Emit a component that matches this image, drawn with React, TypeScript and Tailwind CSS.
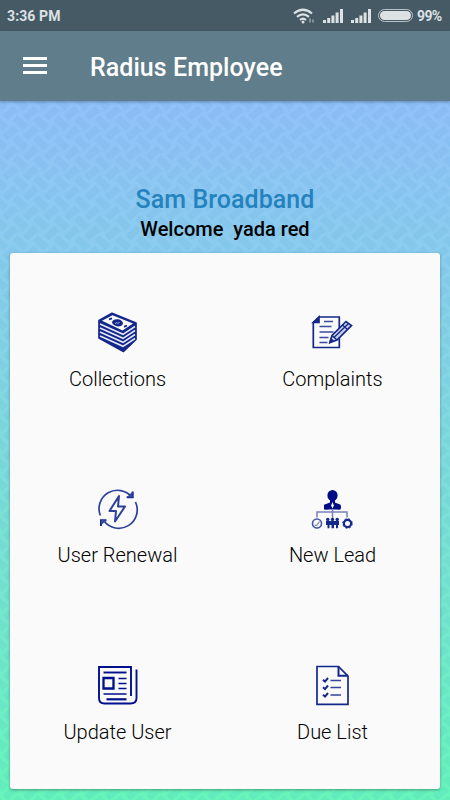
import React from "react";

type IconProps = { children: React.ReactNode };

function Icon({ children }: IconProps) {
  return (
    <svg width="56" height="56" viewBox="0 0 56 56" fill="none" stroke="#14288c" strokeWidth="1.7">
      {children}
    </svg>
  );
}

function MoneyIcon() {
  return (
    <Icon>
      <path d="M9 15.500 22 8.300 46 18 46 34.500 33.500 46.500 9 33Z" fill="#14288c" strokeLinejoin="round" />
      <path d="M12 15.800 22.500 10.200 43 18.400 32.500 25.500Z" fill="#fafafa" stroke="none" />
      <ellipse cx="27.500" cy="17.800" rx="5.500" ry="3.500" fill="#14288c" stroke="none" transform="rotate(10 27.500 17.800)" />
      <path d="M25.500 19c.5-3 2.500 1 4-2" stroke="#b9c0e0" strokeWidth="1" />
      <path d="M19 14.300l3-1M34 21.800l3-1.300" strokeWidth="1.800" />
      <path d="M10 19l23 10.300L45 21.500M10 23l23 10.300L45 25.500M10 27l23 10.300L45 29.500M10 31l23 10.300L45 33.500" stroke="#e4e7f4" strokeWidth="1.500" />
    </Icon>
  );
}

function ComplaintIcon() {
  return (
    <Icon>
      <path d="M15 12H35.300V42.500H9.300V17.500Z" />
      <path d="M15 12V17.500H9.300Z" fill="#14288c" />
      <path d="M20 16.500h9M15.500 21.500h12M15.500 27h14M15.500 32.500h9M15.500 37.500h8" stroke="#3b4b9f" />
      <path d="M26 37.500 28 30.500 42 16.500 47.500 20.500 33 35Z" fill="#c9cee6" />
      <path d="M28 30.500 33 35M30 32.500 44.500 18.500M38.500 20 43.500 24.500" strokeWidth="1.300" />
      <path d="M26 37.500l1-3.500 2 2Z" fill="#14288c" />
    </Icon>
  );
}

function RenewalIcon() {
  return (
    <Icon>
      <g transform="translate(-.5 -1.500)">
        <path d="M10.800 36A18.500 18.500 0 0 1 42.300 17.500M46 22.500A18.500 18.500 0 0 1 14.500 41.500" stroke="#2d409c" />
        <path d="M43.200 12v5.700h-6M11.500 46.500v-5.700h5.500" strokeWidth="2" />
        <path d="M43 12v6h-6ZM11.500 46v-5.500h5.500Z" fill="#3347a0" stroke="none" />
        <path d="M29.500 16.500 20 31.500h6.500L25.500 42 35.500 27h-7Z" strokeLinejoin="round" strokeWidth="2" stroke="#2d409c" />
      </g>
    </Icon>
  );
}

function LeadIcon() {
  return (
    <Icon>
      <g transform="translate(0 -.5)">
        <g fill="#000d83" stroke="none">
          <ellipse cx="28.500" cy="15" rx="5.100" ry="5.500" />
          <path d="M26 19h5v3l5.500 2.300V29H20v-4.700L26 22Z" />
          <circle cx="22.500" cy="26.500" r="2.500" />
          <circle cx="34.500" cy="26.500" r="2.500" />
        </g>
        <path d="m28.500 21.500-1.400 3.500 1.400 3 1.400-3Z" fill="#fafafa" stroke="none" />
        <path d="M28.500 29v9M13 37v-5.500h30V37" stroke="#7983bb" strokeWidth="1.500" />
        <circle cx="13" cy="43" r="4.500" stroke="#4656a5" strokeWidth="1.600" />
        <path d="M10.500 44.500l2 .5 3-4" stroke="#7983bb" strokeWidth="1.200" />
        <g fill="#14288c" stroke="none">
          <circle cx="23.800" cy="39" r="1.700" />
          <circle cx="28.500" cy="39" r="1.700" />
          <circle cx="33.200" cy="39" r="1.700" />
          <path d="M22 40.500h13v4h-1v3.300h-2V44.500h-2v3.300h-2.500V44.500h-2v3.300h-2V44.500H22Z" />
        </g>
        <circle cx="43.500" cy="43" r="3.600" strokeWidth="2.200" />
        <circle cx="43.500" cy="43" r="4.800" strokeWidth="1" strokeDasharray="1.900 1.900" />
      </g>
    </Icon>
  );
}

function NewsIcon() {
  return (
    <Icon>
      <g stroke="#000f8c" strokeWidth="1.900">
        <path d="M41 38V9H9v31c0 3.500 2 5.500 5.500 5.500H40.500c3.500 0 6-2 6-5.500V11.500" />
        <path d="M13.500 14.500h23" />
        <path d="M13.500 20h10v10.500h-10Z" strokeWidth="2.300" />
        <path d="M28.500 20.500h8M28.500 25.500h8M28.500 30.500h8M13.500 36h23" strokeWidth="1.600" />
        <path d="M16.500 41.300h20" strokeWidth="2.200" />
      </g>
    </Icon>
  );
}

function DueIcon() {
  return (
    <Icon>
      <path d="M34.500 8.500H13V46.300H44V18.200Z" />
      <path d="M34.500 8.500v9.200H44" strokeWidth="2" />
      <path d="m19 21.800 2 1.800 3-3.600M19 29.300l2 1.800 3-3.600M19 36.800l2 1.800 3-3.600" strokeWidth="2" />
      <path d="M26.500 22.500h10.500M26.500 29.500h10.500M26.500 37h10.500" stroke="#33459f" strokeWidth="1.600" />
    </Icon>
  );
}

function Weave() {
  return (
    <svg className="absolute inset-0 h-full w-full">
      <defs>
        <pattern id="weave" width="20.5" height="20" patternUnits="userSpaceOnUse" patternTransform="translate(0 2)">
          <g fill="#2587b5" fillOpacity=".07">
            {[[0, 0], [20.5, 0], [0, 20], [20.5, 20]].map(([x, y]) => (
              <rect key={`a${x}-${y}`} x="-7.5" y="-3.700" width="15" height="7.400" transform={`translate(${x} ${y}) rotate(42)`} />
            ))}
            <rect x="-7.500" y="-3.700" width="15" height="7.400" transform="translate(10.250 10) rotate(-42)" />
          </g>
          <g stroke="#2587b5" strokeOpacity=".09" strokeWidth=".8">
            <path d="M0 6.500 4 10M16.500 10 20.500 6.500M5 12.500 8 15.300M12.500 4.500 15.500 7.500" />
          </g>
        </pattern>
      </defs>
      <rect width="100%" height="100%" fill="url(#weave)" />
    </svg>
  );
}

function Signal() {
  return (
    <svg width="20" height="14" viewBox="0 0 20 14" fill="#dce1e3">
      <path d="M0 11h3v3H0ZM4.200 9h3v5h-3ZM8.400 6.500h3V14h-3ZM12.600 3.500h3V14h-3ZM17 0h3v14h-3Z" />
    </svg>
  );
}

const items = [
  { label: "Collections", icon: <MoneyIcon /> },
  { label: "Complaints", icon: <ComplaintIcon /> },
  { label: "User Renewal", icon: <RenewalIcon /> },
  { label: "New Lead", icon: <LeadIcon /> },
  { label: "Update User", icon: <NewsIcon /> },
  { label: "Due List", icon: <DueIcon /> },
];

export default function App() {
  return (
    <div className="flex h-[800px] w-[450px] flex-col overflow-hidden font-['Roboto',sans-serif]">
      <div className="flex h-[31px] shrink-0 items-center bg-[#465a65] pl-[7px] pr-[8px] text-[#dce1e3]">
        <span className="pt-px text-[14px] font-bold leading-none tracking-[0.1px]">3:36 PM</span>
        <svg className="ml-auto" width="22" height="16" viewBox="0 0 22 16" fill="none" stroke="#dce1e3" strokeWidth="2.200">
          <path d="M1 5.500Q10 -2 19 5.500M4 8.800q6-5 12 0M7 12q3-2.600 6 0" />
          <circle cx="10" cy="14" r="1.500" fill="#dce1e3" stroke="none" />
          <path d="M17 10.500v4M20 11.500v3" stroke="#98a5ac" strokeWidth="1.500" />
        </svg>
        <div className="ml-[8px]"><Signal /></div>
        <div className="ml-[8px]"><Signal /></div>
        <div className="ml-[7px] h-[13px] w-[35px] rounded-full border-[1.500px] border-[#b9c2c7] p-px">
          <div className="h-full rounded-full bg-[#dce1e3]" />
        </div>
        <span className="ml-[4px] w-[25px] whitespace-nowrap pt-px text-[14px] font-bold leading-none tracking-[-0.6px]">99%</span>
      </div>
      <header className="relative z-10 flex h-[70px] shrink-0 items-center bg-[#607d8b] pl-[23px] shadow-[0_1px_3px_rgba(0,0,0,0.3)]">
        <div className="flex w-[24px] -translate-y-[1px] flex-col gap-[4px]">
          <div className="h-[3px] bg-white" />
          <div className="h-[3px] bg-white" />
          <div className="h-[3px] bg-white" />
        </div>
        <h1 className="ml-[43px] pt-[3px] text-[25px] font-medium leading-none tracking-[0.05px] text-white">Radius Employee</h1>
      </header>
      <main className="relative flex flex-1 flex-col bg-linear-to-b from-[#92c1fa] to-[#66f5bb] px-[10px] pb-[11px] pt-[84px]">
        <Weave />
        <div className="relative flex h-[68px] shrink-0 flex-col items-center text-center">
          <h2 className="text-[25px] font-medium leading-[30px] tracking-[0.05px] text-[#2482bd]">Sam Broadband</h2>
          <p className="-mt-px whitespace-pre text-[20px] font-medium leading-[30px] text-black">Welcome  yada red</p>
        </div>
        <section className="relative grid flex-1 grid-cols-2 grid-rows-[176px_177px_1fr] rounded-[3px] bg-[#fafafa] pt-[52px] shadow-[0_1px_3px_rgba(0,0,0,0.35)]">
          {items.map(({ label, icon }) => (
            <div key={label} className="group flex flex-col items-center">
              <div className="group-even:-ml-[2px]">{icon}</div>
              <span className="mt-[6px] text-[20px] font-light leading-[24px] text-black">{label}</span>
            </div>
          ))}
        </section>
      </main>
    </div>
  );
}
